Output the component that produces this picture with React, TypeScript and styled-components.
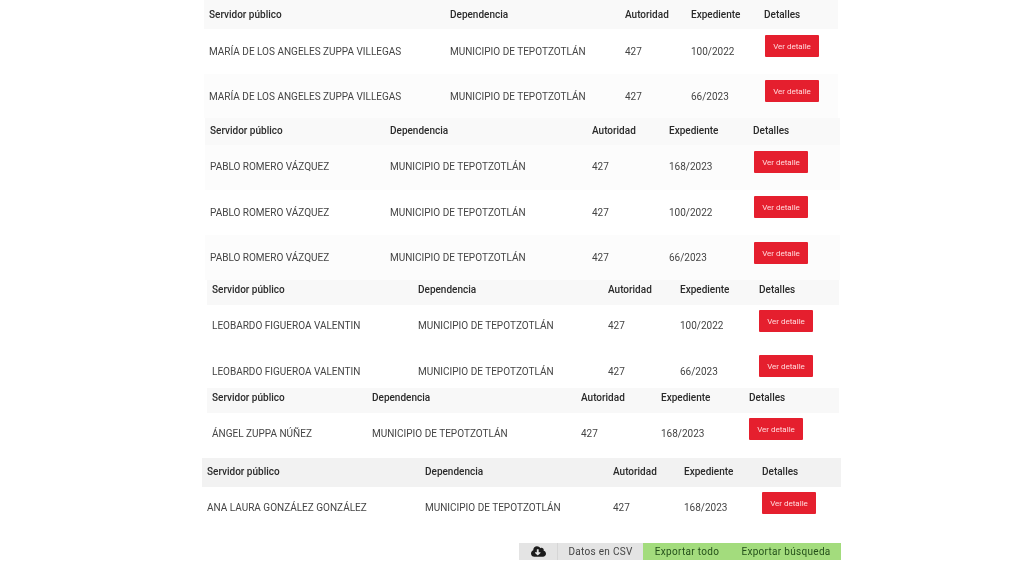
import React, { FC } from 'react';
import styled, { createGlobalStyle } from 'styled-components';
import { FaCloudDownloadAlt } from 'react-icons/fa';

type RowData = {
	name: string;
	file: string;
	height: number;
	shaded?: boolean;
	lift?: number;
	buttonTop?: number;
	overlap?: number;
};

type TableData = {
	left: number;
	width: number;
	columns: string;
	headerHeight: number;
	headerLift: number;
	headerTone: string;
	buttonShift: number;
	rows: RowData[];
};

const MUNICIPIO = 'MUNICIPIO DE TEPOTZOTLÁN';

const tables: TableData[] = [
	{
		left: 204,
		width: 634,
		columns: '241px 175px 66px 73px 1fr',
		headerHeight: 29,
		headerLift: 0,
		headerTone: '#f9f9f9',
		buttonShift: 1,
		rows: [
			{ name: 'MARÍA DE LOS ANGELES ZUPPA VILLEGAS', file: '100/2022', height: 45 },
			{ name: 'MARÍA DE LOS ANGELES ZUPPA VILLEGAS', file: '66/2023', height: 44, shaded: true },
		],
	},
	{
		left: 205,
		width: 635,
		columns: '180px 202px 77px 84px 1fr',
		headerHeight: 27,
		headerLift: 1,
		headerTone: '#f9f9f9',
		buttonShift: 1,
		rows: [
			{ name: 'PABLO ROMERO VÁZQUEZ', file: '168/2023', height: 45, shaded: true, lift: 1 },
			{ name: 'PABLO ROMERO VÁZQUEZ', file: '100/2022', height: 45 },
			{ name: 'PABLO ROMERO VÁZQUEZ', file: '66/2023', height: 45, shaded: true, buttonTop: 7 },
		],
	},
	{
		left: 207,
		width: 632,
		columns: '206px 190px 72px 79px 1fr',
		headerHeight: 25,
		headerLift: 3,
		headerTone: '#f8f8f8',
		buttonShift: 0,
		rows: [
			{ name: 'LEOBARDO FIGUEROA VALENTIN', file: '100/2022', height: 44, lift: 2, buttonTop: 5 },
			{ name: 'LEOBARDO FIGUEROA VALENTIN', file: '66/2023', height: 44, overlap: 5 },
		],
	},
	{
		left: 207,
		width: 632,
		columns: '160px 209px 80px 88px 1fr',
		headerHeight: 25,
		headerLift: 3,
		headerTone: '#f8f8f8',
		buttonShift: 0,
		rows: [{ name: 'ÁNGEL ZUPPA NÚÑEZ', file: '168/2023', height: 45, lift: 2, buttonTop: 5 }],
	},
	{
		left: 202,
		width: 639,
		columns: '218px 188px 71px 78px 1fr',
		headerHeight: 29,
		headerLift: 1,
		headerTone: '#f2f2f2',
		buttonShift: 0,
		rows: [{ name: 'ANA LAURA GONZÁLEZ GONZÁLEZ', file: '168/2023', height: 43, lift: 1, buttonTop: 5 }],
	},
];

const ResultTable: FC<{ table: TableData }> = ({ table }) => (
	<Table $left={table.left} $width={table.width}>
		<HeaderRow
			$columns={table.columns}
			$height={table.headerHeight}
			$lift={table.headerLift}
			$tone={table.headerTone}
		>
			<span>Servidor público</span>
			<span>Dependencia</span>
			<span>Autoridad</span>
			<span>Expediente</span>
			<span>Detalles</span>
		</HeaderRow>
		{table.rows.map((row) => (
			<Row
				key={row.file}
				$columns={table.columns}
				$height={row.height}
				$lift={row.lift ?? 0}
				$overlap={row.overlap ?? 0}
				$shaded={row.shaded}
			>
				<span>{row.name}</span>
				<span>{MUNICIPIO}</span>
				<span>427</span>
				<span>{row.file}</span>
				<DetailButton $top={row.buttonTop ?? 6} $shift={table.buttonShift}>
					Ver detalle
				</DetailButton>
			</Row>
		))}
	</Table>
);

const App: FC = () => (
	<>
		<GlobalStyle />
		<Page>
			{tables.map((table) => (
				<ResultTable key={table.columns} table={table} />
			))}
			<ExportBar>
				<CloudCell>
					<FaCloudDownloadAlt />
				</CloudCell>
				<CsvLabel>Datos en CSV</CsvLabel>
				<ExportLink $width={88}>Exportar todo</ExportLink>
				<ExportLink $width={110}>Exportar búsqueda</ExportLink>
			</ExportBar>
		</Page>
	</>
);

const GlobalStyle = createGlobalStyle`
	html, body {
		margin: 0;
		background: #ffffff;
	}
	body {
		font-family: Roboto, "Liberation Sans", sans-serif;
	}
`;

const Page = styled.div`
	width: 1024px;
	height: 576px;
	overflow: hidden;
	display: flex;
	flex-direction: column;
	filter: blur(0.4px);
`;

const Table = styled.section<{ $left: number; $width: number }>`
	margin-left: ${(props) => props.$left}px;
	width: ${(props) => props.$width}px;
`;

const HeaderRow = styled.div<{ $columns: string; $height: number; $lift: number; $tone: string }>`
	display: grid;
	grid-template-columns: ${(props) => props.$columns};
	align-items: center;
	box-sizing: border-box;
	height: ${(props) => props.$height}px;
	padding: 0 0 ${(props) => props.$lift * 2}px 5px;
	background: ${(props) => props.$tone};
	color: #2a2a2a;
	font-size: 10px;
	font-weight: 500;
`;

const Row = styled.div<{
	$columns: string;
	$height: number;
	$lift: number;
	$overlap: number;
	$shaded?: boolean;
}>`
	display: grid;
	grid-template-columns: ${(props) => props.$columns};
	align-items: center;
	box-sizing: border-box;
	height: ${(props) => props.$height}px;
	margin-bottom: -${(props) => props.$overlap}px;
	padding: 0 0 ${(props) => props.$lift * 2}px 5px;
	background: ${(props) => (props.$shaded ? '#fcfcfc' : '#ffffff')};
	color: #444444;
	font-size: 10px;
`;

const DetailButton = styled.button<{ $top: number; $shift: number }>`
	align-self: start;
	width: 54px;
	height: 22px;
	margin: ${(props) => props.$top}px 0 0 ${(props) => props.$shift}px;
	padding: 0;
	border: none;
	border-radius: 1px;
	background: #e51f2e;
	color: #ffd9dc;
	font-family: inherit;
	font-size: 8px;
`;

const ExportBar = styled.div`
	display: flex;
	align-self: flex-start;
	height: 17px;
	margin: 13px 0 0 519px;
	font-size: 10px;
	line-height: 17px;
	letter-spacing: 0.3px;
`;

const CloudCell = styled.div`
	display: flex;
	align-items: center;
	justify-content: center;
	width: 39px;
	background: #e4e4e4;
	border-right: 1px solid #d6d6d6;
	box-sizing: border-box;
	color: #1c1c1c;
	font-size: 15px;
`;

const CsvLabel = styled.div`
	width: 85px;
	background: #e4e4e4;
	color: #444444;
	text-align: center;
`;

const ExportLink = styled.div<{ $width: number }>`
	width: ${(props) => props.$width}px;
	background: #a3dc7d;
	color: #24501a;
	text-align: center;
`;

export default App;
